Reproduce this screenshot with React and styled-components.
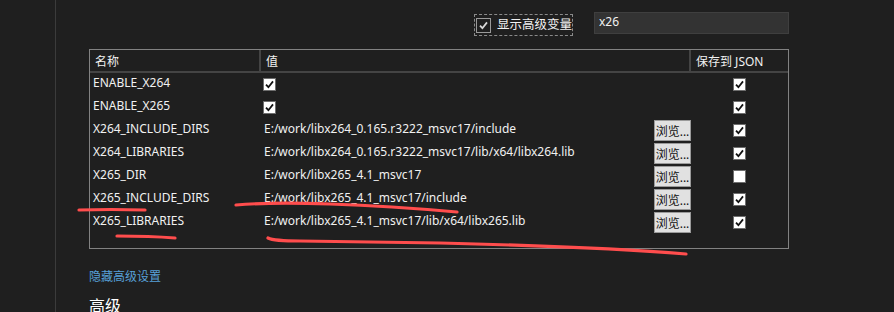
import React from "react";
import styled, { createGlobalStyle } from "styled-components";

const rows = [
  { name: "ENABLE_X264", check: true, save: true },
  { name: "ENABLE_X265", check: true, save: true },
  {
    name: "X264_INCLUDE_DIRS",
    value: "E:/work/libx264_0.165.r3222_msvc17/include",
    save: true,
  },
  {
    name: "X264_LIBRARIES",
    value: "E:/work/libx264_0.165.r3222_msvc17/lib/x64/libx264.lib",
    save: true,
  },
  { name: "X265_DIR", value: "E:/work/libx265_4.1_msvc17", save: false },
  {
    name: "X265_INCLUDE_DIRS",
    value: "E:/work/libx265_4.1_msvc17/include",
    save: true,
  },
  {
    name: "X265_LIBRARIES",
    value: "E:/work/libx265_4.1_msvc17/lib/x64/libx265.lib",
    save: true,
  },
];

function CheckMark({ color }) {
  return (
    <svg width="11" height="11" viewBox="0 0 11 11">
      <path
        d="M2 5.6 L4.4 8.2 L9 2.4"
        fill="none"
        stroke={color}
        strokeWidth="1.8"
      />
    </svg>
  );
}

function App() {
  return (
    <>
      <GlobalStyle />
      <Page>
        <Sidebar />
        <Main>
          <TopBar>
            <ShowAdvanced>
              <DarkBox>
                <CheckMark color="#d8d8d8" />
              </DarkBox>
              显示高级变量
            </ShowAdvanced>
            <SearchBox defaultValue="x26" />
          </TopBar>

          <Table>
            <HeaderRow>
              <HeaderCell>名称</HeaderCell>
              <HeaderCell>值</HeaderCell>
              <HeaderCell $last>保存到 JSON</HeaderCell>
            </HeaderRow>
            {rows.map((row) => (
              <Row key={row.name}>
                <CellText>{row.name}</CellText>
                <ValueCell>
                  {row.value ? (
                    <>
                      <CellText>{row.value}</CellText>
                      <BrowseButton>浏览...</BrowseButton>
                    </>
                  ) : (
                    <WhiteBox>{row.check && <CheckMark color="#111" />}</WhiteBox>
                  )}
                </ValueCell>
                <SaveCell>
                  <WhiteBox>{row.save && <CheckMark color="#111" />}</WhiteBox>
                </SaveCell>
              </Row>
            ))}
          </Table>

          <HideLink>隐藏高级设置</HideLink>
          <SectionTitle>高级</SectionTitle>
        </Main>

        <Marks viewBox="0 0 894 312">
          <path d="M79 210 Q 110 209 145 210" />
          <path d="M236 205 Q 270 202 330 204 T 457 212" />
          <path d="M117 236 Q 150 236 175 238" />
          <path d="M268 238 Q 274 241 300 241 L 440 243 Q 600 247 686 254" />
        </Marks>
      </Page>
    </>
  );
}

const GlobalStyle = createGlobalStyle`
  body {
    margin: 0;
    background: #1f1f1f;
    color: #f1f1f1;
    font-family: "Noto Sans", "Noto Sans CJK SC", sans-serif;
    font-size: 12px;
  }
`;

const Page = styled.div`
  position: relative;
  display: flex;
  height: 312px;
  overflow: hidden;
`;

const Sidebar = styled.div`
  width: 55px;
  border-right: 1px solid #3b3b3b;
`;

const Main = styled.div`
  padding: 12px 0 0 33px;
  width: 700px;
`;

const TopBar = styled.div`
  display: flex;
  justify-content: flex-end;
  align-items: flex-start;
  height: 37px;
`;

const ShowAdvanced = styled.label`
  display: flex;
  align-items: center;
  gap: 6px;
  box-sizing: border-box;
  height: 22px;
  margin-top: 2px;
  padding: 0 0 0 1px;
  border: 1px dashed #8a8a8a;
  font-size: 12.5px;
  line-height: 1;
`;

const DarkBox = styled.span`
  display: flex;
  align-items: center;
  justify-content: center;
  box-sizing: border-box;
  width: 15px;
  height: 15px;
  border: 1px solid #9a9a9a;
  background: #1f1f1f;
`;

const SearchBox = styled.input`
  box-sizing: border-box;
  width: 195px;
  height: 22px;
  margin-left: 21px;
  padding: 0 4px 4px;
  background: #333333;
  border: 1px solid #3f3f3f;
  color: #f1f1f1;
  font: inherit;
  outline: none;
`;

const Table = styled.div`
  box-sizing: border-box;
  width: 700px;
  height: 200px;
  border: 1px solid #828282;
`;

const columns = "171px 430px 1fr";

const HeaderRow = styled.div`
  display: grid;
  grid-template-columns: ${columns};
  height: 23px;
  border-bottom: 2px solid #444444;
  box-sizing: border-box;
`;

const HeaderCell = styled.div`
  display: flex;
  align-items: center;
  padding-left: 5px;
  border-right: ${(p) => (p.$last ? "none" : "2px solid #444444")};
`;

const Row = styled.div`
  display: grid;
  grid-template-columns: ${columns};
  height: 23px;
  align-items: center;
`;

const CellText = styled.span`
  padding: 0 0 4px 3px;
  white-space: nowrap;
`;

const ValueCell = styled.div`
  display: flex;
  align-items: center;
  justify-content: space-between;
  white-space: nowrap;

  & > span:first-child:not(${CellText}) {
    margin-left: 2px;
  }
`;

const SaveCell = styled.div`
  display: flex;
  justify-content: center;
`;

const WhiteBox = styled.span`
  display: flex;
  align-items: center;
  justify-content: center;
  box-sizing: border-box;
  width: 13px;
  height: 13px;
  margin-left: 2px;
  background: #ffffff;
  border: 1px solid #6e6e6e;

  ${SaveCell} & {
    margin-left: 0;
  }
`;

const BrowseButton = styled.button`
  box-sizing: border-box;
  width: 37px;
  height: 21px;
  padding: 0;
  background: #e1e1e1;
  border: 1px solid #9a9a9a;
  color: #111;
  font: inherit;
  font-size: 12px;
`;

const HideLink = styled.div`
  margin-top: 18px;
  color: #57a0d8;
  font-size: 12px;
`;

const SectionTitle = styled.div`
  margin-top: 8px;
  font-size: 16px;
  color: #ffffff;
`;

const Marks = styled.svg`
  position: absolute;
  left: 0;
  top: 0;
  width: 894px;
  height: 312px;
  pointer-events: none;

  path {
    fill: none;
    stroke: #ff4d4d;
    stroke-width: 3.2;
    stroke-linecap: round;
  }
`;

export default App;
